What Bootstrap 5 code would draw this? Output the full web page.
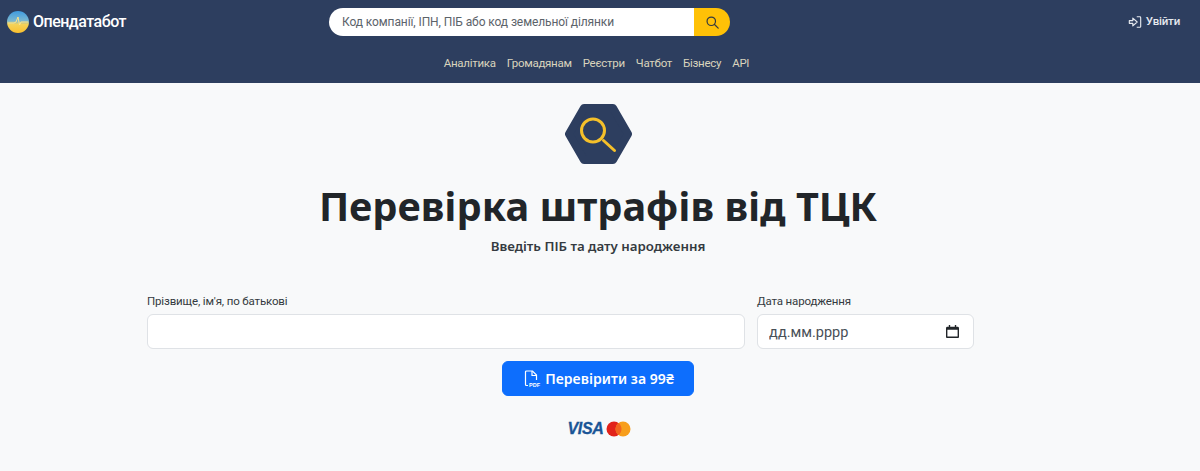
<!DOCTYPE html>
<html lang="uk">
<head>
    <meta charset="UTF-8">
    <meta name="viewport" content="width=device-width, initial-scale=1.0">
    <title>Перевірка штрафів від ТЦК</title>
    <link href="https://cdn.jsdelivr.net/npm/bootstrap@5.3.0/dist/css/bootstrap.min.css" rel="stylesheet">
    <style>
        body {
            font-family: Roboto, "Noto Sans", sans-serif;
            background: #f8f9fa;
            color: #212529;
            overflow: hidden;
        }
        .top-bar { background: #2d3e5f; height: 83px; }
        .top-row { height: 44px; padding: 0 20px 0 7px; }
        .brand-box { width: 322px; color: #fff; font-size: 16px; letter-spacing: -0.5px; font-weight: 500; }
        .search-box { width: 401px; height: 28px; }
        .search-input {
            height: 28px;
            font-size: 12px;
            letter-spacing: -0.1px;
            border: 0;
            padding: 0 13px;
            border-radius: 14px 0 0 14px;
        }
        .search-input::placeholder { color: #5c636a; opacity: 1; }
        .search-btn {
            width: 36px;
            background: #ffc107;
            border: 0;
            padding: 0;
            border-radius: 0 14px 14px 0;
        }
        .login-link { color: #e6e9ef; font-size: 11.5px; letter-spacing: -0.2px; font-weight: 500; text-decoration: none; }
        .menu-row { gap: 11px; padding: 11px 7px 0 0; }
        .menu-row a { color: #d9d4bd; font-size: 11.5px; letter-spacing: -0.28px; text-decoration: none; }
        .page-body { padding-right: 4px; }
        .hex-wrap { padding-top: 21px; height: 93px; }
        .main-title { font-family: "Noto Sans", sans-serif; font-size: 39.7px; font-weight: 700; line-height: 60px; margin: 0; }
        .main-sub { font-family: "Noto Sans", sans-serif; font-size: 13.3px; font-weight: 600; line-height: 20px; margin: 0; color: #343a40; }
        .field-row { width: 827px; margin: 37px 0 0 147px; }
        .name-col { width: 598px; }
        .date-col { width: 217px; }
        .field-label { font-size: 11.5px; letter-spacing: -0.15px; line-height: 16px; margin-bottom: 5px; color: #343a40; }
        .field-input {
            height: 35px;
            border: 1px solid #dfe2e6;
            border-radius: 6px;
            font-size: 14.5px;
            padding: 2px 11px 0;
        }
        .date-input::placeholder { color: #495057; opacity: 1; }
        .date-box { position: relative; }
        .date-icon { position: absolute; right: 15px; top: 11px; }
        .pay-btn {
            font-family: "Noto Sans", sans-serif;
            width: 192px;
            height: 35px;
            padding: 0 0 0 2px;
            font-size: 14px;
            letter-spacing: 0.05px;
            font-weight: 600;
            border-radius: 6px;
            margin-top: 12px;
        }
        .pdf-label { font-family: "Liberation Sans", sans-serif; font-size: 5.5px; font-weight: 700; fill: #fff; }
        .visa-text {
            color: #1a5596;
            font-family: "Liberation Sans", sans-serif;
            font-size: 16px;
            font-weight: 700;
            font-style: italic;
            letter-spacing: -0.3px;
            -webkit-text-stroke: 0.3px #1a5596;
        }
        .cards-row { margin-top: 22px; height: 22px; gap: 2px; padding-left: 2px; }
    </style>
</head>
<body>
    <header class="top-bar">
        <div class="top-row d-flex align-items-center">
            <a class="brand-box d-flex align-items-center gap-1 text-decoration-none" href="#">
                <svg width="22" height="22" viewBox="0 0 22 22">
                    <defs>
                        <linearGradient id="logoFill" x1="0" y1="0" x2="0" y2="1">
                            <stop offset="0" stop-color="#3f9be0"/>
                            <stop offset="0.45" stop-color="#7cb8d0"/>
                            <stop offset="0.6" stop-color="#f4d35a"/>
                            <stop offset="1" stop-color="#fbc02d"/>
                        </linearGradient>
                    </defs>
                    <circle cx="11" cy="11" r="11" fill="url(#logoFill)"/>
                    <path d="M1 12h6l2-1 2-5 1.500 8 1.500-3h7" fill="none" stroke="#ffe58a" stroke-width="1"/>
                </svg>
                <span class="text-white">Опендатабот</span>
            </a>
            <form class="search-box d-flex">
                <input class="form-control search-input" type="text" placeholder="Код компанії, ІПН, ПІБ або код земельної ділянки">
                <button class="search-btn flex-shrink-0 d-flex align-items-center justify-content-center" type="button" aria-label="Пошук">
                    <svg width="13" height="13" viewBox="0 0 16 16" fill="none" stroke="#343a40" stroke-width="1.500">
                        <circle cx="6.500" cy="6.500" r="5.200"/>
                        <path d="M10.500 10.500 15 15" stroke-linecap="round"/>
                    </svg>
                </button>
            </form>
            <a class="login-link ms-auto d-flex align-items-center gap-1" href="#">
                <svg width="14" height="14" viewBox="0 0 16 16" fill="none" stroke="#e6e9ef" stroke-width="1.300">
                    <path d="M1.500 6.500h4v-3L10.500 8l-5 4.500v-3h-4z" stroke-linejoin="round"/>
                    <path d="M10 2h3.500a1 1 0 0 1 1 1v10a1 1 0 0 1-1 1H10"/>
                </svg>
                Увійти
            </a>
        </div>
        <nav class="menu-row d-flex justify-content-center">
            <a href="#">Аналітика</a>
            <a href="#">Громадянам</a>
            <a href="#">Реєстри</a>
            <a href="#">Чатбот</a>
            <a href="#">Бізнесу</a>
            <a href="#">API</a>
        </nav>
    </header>

    <main class="page-body text-center">
        <div class="hex-wrap d-flex justify-content-center">
            <svg width="68" height="60" viewBox="0 0 68 60">
                <path d="M20 4h29l15 26-15 26H20L5 30z" fill="#2d3e5f" stroke="#2d3e5f" stroke-width="8" stroke-linejoin="round"/>
                <circle cx="29" cy="26.500" r="11.500" fill="none" stroke="#f5c02a" stroke-width="3"/>
                <path d="M39.500 36.500 50.500 46.500" stroke="#f5c02a" stroke-width="3" stroke-linecap="round"/>
            </svg>
        </div>
        <h1 class="main-title">Перевірка штрафів від ТЦК</h1>
        <p class="main-sub">Введіть ПІБ та дату народження</p>

        <form class="text-start">
            <div class="field-row d-flex justify-content-between">
                <div class="name-col">
                    <label class="field-label d-block">Прізвище, ім'я, по батькові</label>
                    <input class="form-control field-input" type="text">
                </div>
                <div class="date-col">
                    <label class="field-label d-block">Дата народження</label>
                    <div class="date-box">
                        <input class="form-control field-input date-input" type="text" placeholder="дд.мм.рррр">
                        <svg class="date-icon" width="13" height="13" viewBox="0 0 14 14">
                            <path d="M3 0h1.500v2h5V0H11v2h1.500A1.500 1.500 0 0 1 14 3.500V13a1 1 0 0 1-1 1H1a1 1 0 0 1-1-1V3.500A1.500 1.500 0 0 1 1.500 2H3zM1.500 5v7.500h11V5z" fill="#212529"/>
                        </svg>
                    </div>
                </div>
            </div>
            <div class="d-flex justify-content-center">
                <button class="btn btn-primary pay-btn d-flex align-items-center justify-content-center gap-1" type="button">
                    <svg width="17" height="18" viewBox="0 0 17 18" fill="none" stroke="#fff" stroke-width="1.200">
                        <path d="M4 15.500H2.500a1 1 0 0 1-1-1V2a1 1 0 0 1 1-1h6l4 4v5"/>
                        <path d="M8 1v4.500h4.500"/>
                        <text class="pdf-label" x="5" y="16.500" stroke="none">PDF</text>
                    </svg>
                    Перевірити за 99₴
                </button>
            </div>
            <div class="cards-row d-flex justify-content-center align-items-center">
                <span class="visa-text">VISA</span>
                <svg width="25" height="16" viewBox="0 0 25 16">
                    <circle cx="8" cy="8" r="7.500" fill="#e2231a"/>
                    <circle cx="17" cy="8" r="7.500" fill="#f79e1b"/>
                    <path d="M12.500 2a7.500 7.500 0 0 1 0 12 7.500 7.500 0 0 1 0-12z" fill="#f2641e"/>
                </svg>
            </div>
        </form>
    </main>

    <script src="https://cdn.jsdelivr.net/npm/bootstrap@5.3.0/dist/js/bootstrap.bundle.min.js"></script>
</body>
</html>
